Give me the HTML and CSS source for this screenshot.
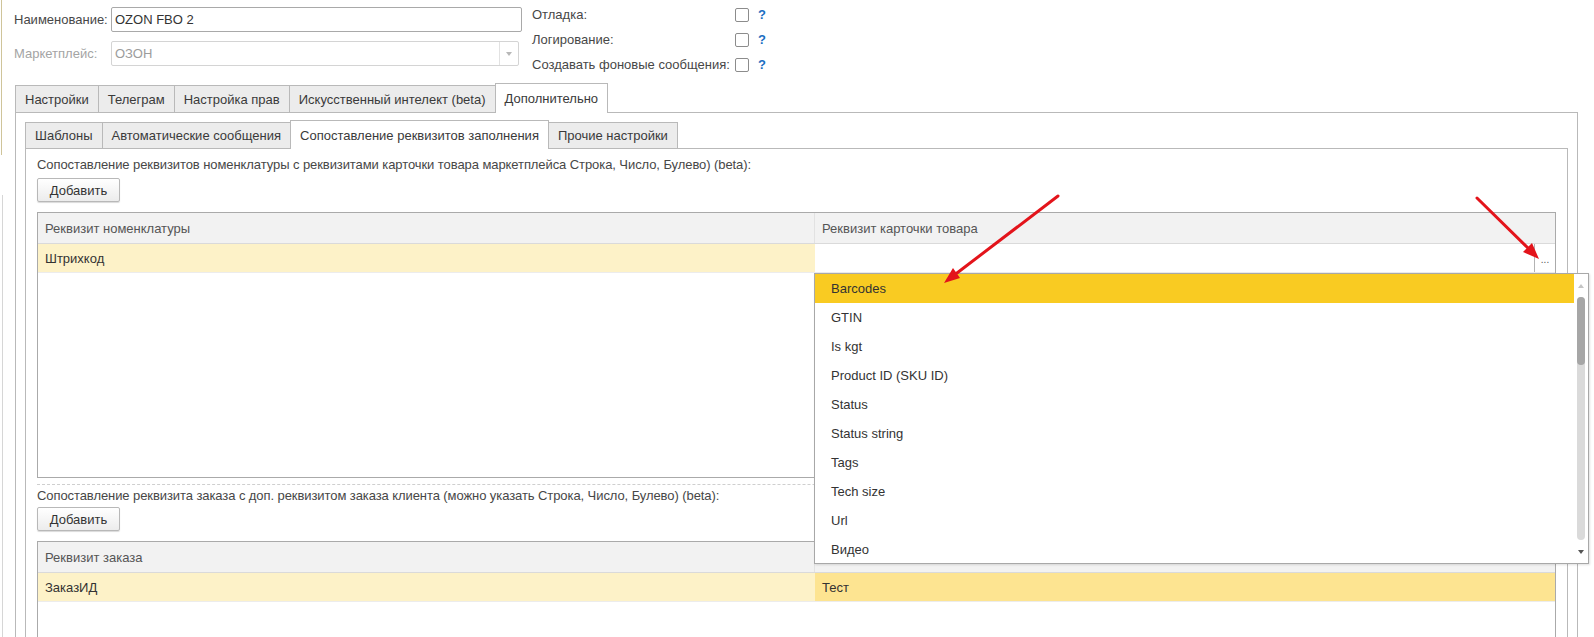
FILE: index.html
```html
<!DOCTYPE html>
<html lang="ru">
<head>
  <meta charset="UTF-8" />
  <title>OZON FBO 2</title>
  <link rel="stylesheet" href="styles.css">
</head>
<body>

  <div class="form-head">
    <div class="fields">
      <div class="field">
        <span class="label">Наименование:</span>
        <div class="input">OZON FBO 2</div>
      </div>
      <div class="field disabled">
        <span class="label">Маркетплейс:</span>
        <div class="input select"><span>ОЗОН</span><span class="drop"></span></div>
      </div>
    </div>
    <div class="flags">
      <div class="flag"><span class="flag-name">Отладка:</span><span class="check"></span><span class="help">?</span></div>
      <div class="flag"><span class="flag-name">Логирование:</span><span class="check"></span><span class="help">?</span></div>
      <div class="flag"><span class="flag-name">Создавать фоновые сообщения:</span><span class="check"></span><span class="help">?</span></div>
    </div>
  </div>

  <div class="tabs main">
    <div class="tab">Настройки</div>
    <div class="tab">Телеграм</div>
    <div class="tab">Настройка прав</div>
    <div class="tab">Искусственный интелект (beta)</div>
    <div class="tab active">Дополнительно</div>
  </div>

  <div class="panel">
    <div class="tabs sub">
      <div class="tab">Шаблоны</div>
      <div class="tab">Автоматические сообщения</div>
      <div class="tab active">Сопоставление реквизитов заполнения</div>
      <div class="tab">Прочие настройки</div>
    </div>

    <div class="panel inner">
      <div class="caption">Сопоставление реквизитов номенклатуры с реквизитами карточки товара маркетплейса Строка, Число, Булево) (beta):</div>
      <button class="btn">Добавить</button>

      <div class="grid first">
        <div class="grid-head">
          <div class="cell c1">Реквизит номенклатуры</div>
          <div class="cell c2">Реквизит карточки товара</div>
        </div>
        <div class="grid-row">
          <div class="cell c1 sel">Штрихкод</div>
          <div class="cell c2 edit"><span class="pick">...</span></div>
        </div>
      </div>

      <div class="divider"></div>

      <div class="caption second">Сопоставление реквизита заказа с доп. реквизитом заказа клиента (можно указать Строка, Число, Булево) (beta):</div>
      <button class="btn tight">Добавить</button>

      <div class="grid last">
        <div class="grid-head">
          <div class="cell c1">Реквизит заказа</div>
          <div class="cell c2"></div>
        </div>
        <div class="grid-row">
          <div class="cell c1 sel">ЗаказИД</div>
          <div class="cell c2 current">Тест</div>
        </div>
      </div>
    </div>
  </div>

  <div class="popup">
    <div class="popup-list">
      <div class="opt sel">Barcodes</div>
      <div class="opt">GTIN</div>
      <div class="opt">Is kgt</div>
      <div class="opt">Product ID (SKU ID)</div>
      <div class="opt">Status</div>
      <div class="opt">Status string</div>
      <div class="opt">Tags</div>
      <div class="opt">Tech size</div>
      <div class="opt">Url</div>
      <div class="opt">Видео</div>
    </div>
    <div class="popup-scroll">
      <div class="arrow up"></div>
      <div class="track"><div class="thumb"></div></div>
      <div class="arrow down"></div>
    </div>
  </div>

  <svg class="arrows" width="1594" height="637" viewBox="0 0 1594 637">
    <line x1="1058" y1="196" x2="957" y2="273" stroke="#e3141b" stroke-width="3" stroke-linecap="round"/>
    <polygon points="944,283 960,278 953,268" fill="#e3141b"/>
    <line x1="1477" y1="198" x2="1528" y2="248" stroke="#e3141b" stroke-width="3" stroke-linecap="round"/>
    <polygon points="1539,259 1523,252 1532,243" fill="#e3141b"/>
  </svg>

</body>
</html>
```

FILE: styles.css
```css
* {
  box-sizing: border-box;
}

html, body {
  height: 100%;
}

body {
  margin: 0;
  overflow: hidden;
  font-family: "Liberation Sans", Arial, sans-serif;
  font-size: 13px;
  color: #474747;
  background:
    linear-gradient(#cfc49a, #cfc49a) no-repeat 1px 0 / 1px 155px,
    linear-gradient(#d6d6d6, #d6d6d6) no-repeat 2px 195px / 1px 100%,
    #fff;
}

/* header fields */

.form-head {
  display: flex;
  height: 66px;
  padding: 7px 0 0 14px;
}

.fields {
  display: flex;
  flex-direction: column;
  gap: 9px;
  width: 508px;
}

.field {
  display: flex;
  align-items: center;
  height: 25px;
}

.label {
  width: 97px;
}

.input {
  display: flex;
  align-items: center;
  width: 411px;
  height: 25px;
  padding: 0 3px;
  border: 1px solid #a9a9a9;
  border-radius: 2px;
  color: #333;
}

.field.disabled .label {
  color: #a4a4a4;
}

.field.disabled .input {
  width: 408px;
  border-color: #d4d4d4;
  color: #9c9c9c;
}

.select {
  justify-content: space-between;
  padding-right: 0;
}

.drop {
  display: flex;
  align-items: center;
  justify-content: center;
  width: 19px;
  height: 100%;
  border-left: 1px solid #e2e2e2;
}

.drop::after {
  content: "";
  margin-top: 3px;
  border: 3px solid transparent;
  border-top: 4px solid #b8b8b8;
}

.flags {
  margin: -5px 0 0 10px;
}

.flag {
  display: flex;
  align-items: center;
  height: 25px;
}

.flag-name {
  width: 203px;
}

.check {
  width: 14px;
  height: 14px;
  border: 1px solid #8c8c8c;
  border-radius: 2px;
}

.help {
  margin-left: 9px;
  color: #1b6ec2;
  font-weight: bold;
}

/* tabs */

.tabs {
  display: flex;
  align-items: flex-start;
}

.tabs.main {
  margin: 17px 0 0 15px;
}

.tab {
  display: flex;
  align-items: center;
  height: 27px;
  margin: 2px -1px 0 0;
  padding: 0 9px;
  border: 1px solid #b9b9b9;
  border-bottom: none;
  background: #ececec;
  color: #3a3a3a;
}

.tab.active {
  position: relative;
  z-index: 1;
  height: 30px;
  margin-top: 0;
  margin-bottom: -1px;
  background: #fff;
}

.tabs.sub .tab {
  height: 26px;
}

.tabs.sub .tab.active {
  height: 29px;
}

.panel {
  width: 1563px;
  margin-left: 15px;
  padding: 7px 9px 0;
  border: 1px solid #b9b9b9;
  background: #fff;
}

.panel.inner {
  width: auto;
  margin: 0;
  padding: 7px 11px 0;
}

/* content */

.caption {
  line-height: 18px;
  letter-spacing: -0.08px;
}

.caption.second {
  margin-top: 2px;
}

.btn {
  display: block;
  width: 83px;
  height: 24px;
  margin-top: 4px;
  padding: 0;
  border: 1px solid #b8b8b8;
  border-radius: 2px;
  background: linear-gradient(#ffffff, #ececec);
  box-shadow: 0 1px 1px rgba(0, 0, 0, 0.15);
  font: inherit;
  color: #333;
}

.btn.tight {
  margin-top: 2px;
}

.grid {
  margin-top: 10px;
  border: 1px solid #aaaaaa;
}

.grid.first {
  height: 266px;
}

.grid.last {
  height: 140px;
}

.grid-head {
  display: flex;
  height: 31px;
  background: #f2f2f2;
  border-bottom: 1px solid #dadada;
  color: #555;
}

.grid-row {
  display: flex;
  height: 29px;
  border-bottom: 1px solid #ececec;
  color: #333;
}

.cell {
  display: flex;
  align-items: center;
  padding: 0 8px 0 7px;
}

.c1 {
  width: 777px;
  border-right: 1px solid #e2e2e2;
}

.c2 {
  flex: 1;
}

.cell.sel {
  background: #fdf2c8;
  border-right-color: #fdf2c8;
}

.cell.current {
  background: #fde491;
}

.cell.edit {
  justify-content: flex-end;
  padding: 0;
}

.pick {
  display: flex;
  align-items: center;
  justify-content: center;
  width: 21px;
  height: 100%;
  padding-top: 3px;
  border-left: 1px solid #b3b3b3;
  font-size: 10px;
  color: #555;
}

.divider {
  margin-top: 6px;
  border-top: 1px dashed #cfcfcf;
}

/* dropdown list over the grid */

.popup {
  position: absolute;
  top: 273px;
  left: 814px;
  display: flex;
  width: 775px;
  height: 291px;
  border: 1px solid #a8a8a8;
  background: #fff;
  box-shadow: 1px 1px 2px rgba(0, 0, 0, 0.12);
  overflow: hidden;
}

.popup-list {
  flex: 1;
}

.opt {
  display: flex;
  align-items: center;
  height: 29px;
  padding-left: 16px;
  color: #333;
}

.opt.sel {
  background: #f9cb22;
}

.popup-scroll {
  display: flex;
  flex-direction: column;
  align-items: center;
  width: 14px;
}

.arrow {
  display: flex;
  align-items: center;
  justify-content: center;
  height: 23px;
}

.arrow.up::after {
  content: "";
  border: 3px solid transparent;
  border-bottom: 4px solid #c4c4c4;
  margin-bottom: 3px;
}

.arrow.down::after {
  content: "";
  border: 3px solid transparent;
  border-top: 4px solid #555;
  margin-top: 3px;
}

.track {
  flex: 1;
  width: 8px;
  border-radius: 4px;
  background: #dadada;
}

.thumb {
  height: 68px;
  border-radius: 4px;
  background: #a6a6a6;
}

.arrows {
  position: absolute;
  top: 0;
  left: 0;
  pointer-events: none;
}
```
